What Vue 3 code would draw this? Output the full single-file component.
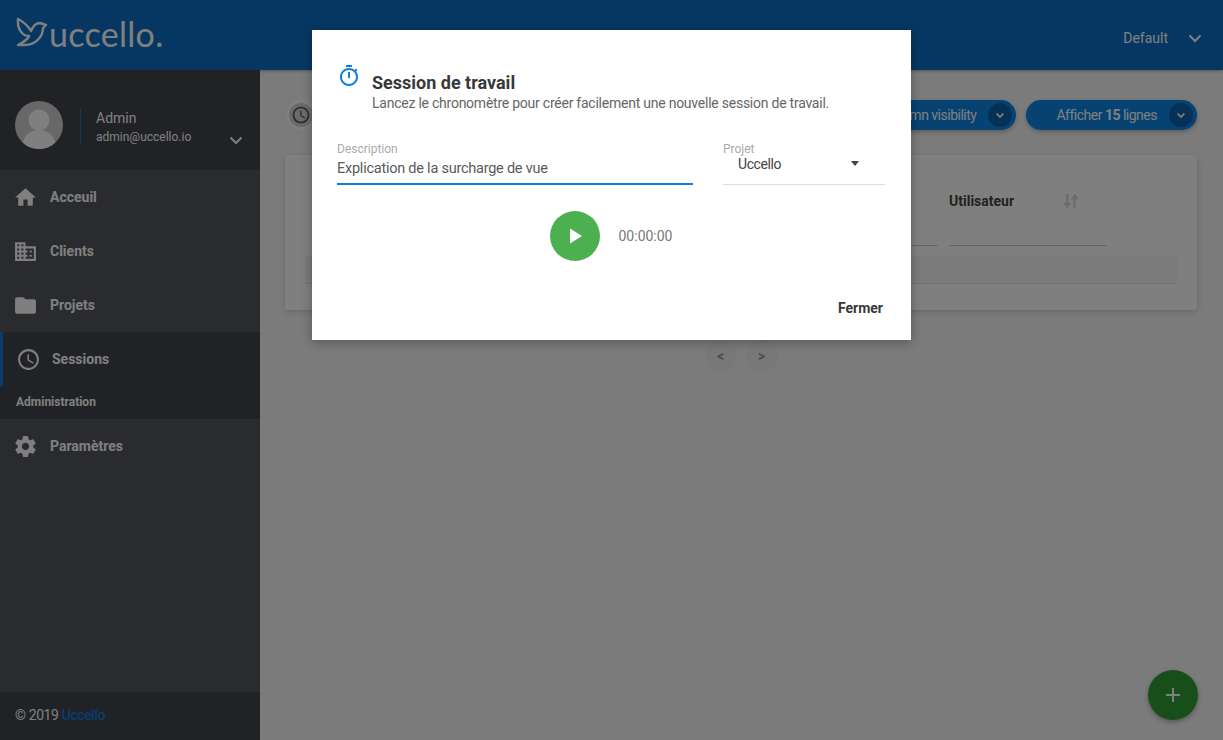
<template>
  <div class="page">
    <header class="topbar">
      <div class="logo">
        <svg class="bird" width="32" height="32" viewBox="0 0 32 32" fill="none" stroke="#fff" stroke-width="2.400" stroke-linejoin="round" stroke-linecap="round">
          <path d="M2 2C8 5 12 9 15 14C17 9 20 6 24 6L30 8L27 11C27 19 20 28 9 28L2 28C8 25 12 22 13 19C7 19 1 13 2 2Z" />
        </svg>
        <span class="logo-text">uccello.</span>
      </div>
      <div class="theme">
        <span>Default</span>
        <svg width="24" height="24" viewBox="0 0 24 24" fill="none" stroke="#fff" stroke-width="2"><path d="M6.500 9.500L12 15l5.500-5.500" /></svg>
      </div>
    </header>

    <div class="body">
      <aside class="sidebar">
        <div class="user">
          <div class="avatar">
            <svg width="48" height="48" viewBox="0 0 48 48" fill="#fff">
              <circle cx="24" cy="19" r="10.500" />
              <path d="M7 48C7 36 14 29 24 29C34 29 41 36 41 48Z" />
            </svg>
          </div>
          <div class="user-info">
            <div class="user-name">Admin</div>
            <div class="user-mail">admin@uccello.io</div>
          </div>
          <svg class="user-arrow" width="24" height="24" viewBox="0 0 24 24" fill="none" stroke="#fff" stroke-width="2"><path d="M6.500 9.500L12 15l5.500-5.500" /></svg>
        </div>

        <nav class="menu">
          <a v-for="item in topItems" :key="item.label" class="item" :class="{ active: item.active }">
            <svg class="item-icon" viewBox="0 0 24 24"><path v-for="d in item.paths" :key="d" :d="d" /></svg>
            <span>{{ item.label }}</span>
          </a>
          <div class="section">Administration</div>
          <a class="item">
            <svg class="item-icon" viewBox="0 0 24 24"><path :d="gear" /></svg>
            <span>Paramètres</span>
          </a>
        </nav>

        <footer class="copy">© 2019 <b>Uccello</b></footer>
      </aside>

      <main class="content">
        <div class="toolbar">
          <div class="history">
            <svg width="20" height="20" viewBox="0 0 24 24"><path v-for="d in clock" :key="d" :d="d" fill="#555" /></svg>
          </div>
          <div class="spacer" />
          <div class="pill pill-col">
            <span>Column visibility</span>
            <i class="pill-arrow"><svg width="16" height="16" viewBox="0 0 24 24" fill="none" stroke="#fff" stroke-width="2.500"><path d="M7 10l5 5 5-5" /></svg></i>
          </div>
          <div class="pill pill-lines">
            <span>Afficher <b>15</b> lignes</span>
            <i class="pill-arrow"><svg width="16" height="16" viewBox="0 0 24 24" fill="none" stroke="#fff" stroke-width="2.500"><path d="M7 10l5 5 5-5" /></svg></i>
          </div>
        </div>

        <section class="card">
          <div class="columns">
            <div class="column column-prev">
              <div class="column-line" />
            </div>
            <div class="column">
              <div class="column-head">
                <span>Utilisateur</span>
                <svg width="20" height="20" viewBox="0 0 24 24" fill="#d8d8d8"><path d="M9 3H6v11H2.500L7.500 21l5-7H9zM21.500 10L16.500 3l-5 7H14.500v11h3V10z" /></svg>
              </div>
              <div class="column-line" />
            </div>
          </div>
          <div class="row" />
        </section>

        <div class="pager">
          <span class="page-btn">&lt;</span>
          <span class="page-btn">&gt;</span>
        </div>

        <div class="fab">
          <svg width="24" height="24" viewBox="0 0 24 24" fill="#fff"><path d="M19 13h-6v6h-2v-6H5v-2h6V5h2v6h6z" /></svg>
        </div>
      </main>
    </div>

    <div class="overlay">
      <div class="modal">
        <div class="modal-head">
          <svg class="timer" width="24" height="24" viewBox="0 0 24 24" fill="#0f7ddc"><path d="M15 1H9v2h6V1zm-4 13h2V8h-2v6zm8.030-6.610l1.420-1.420c-.43-.51-.9-.99-1.410-1.410l-1.420 1.420C16.070 4.740 14.120 4 12 4c-4.970 0-9 4.030-9 9s4.020 9 9 9 9-4.030 9-9c0-2.120-.74-4.070-1.970-5.610zM12 20c-3.870 0-7-3.130-7-7s3.130-7 7-7 7 3.130 7 7-3.130 7-7 7z" /></svg>
          <div>
            <h2>Session de travail</h2>
            <p>Lancez le chronomètre pour créer facilement une nouvelle session de travail.</p>
          </div>
        </div>

        <div class="fields">
          <div class="field field-desc">
            <label>Description</label>
            <div class="value">Explication de la surcharge de vue</div>
          </div>
          <div class="field field-project">
            <label>Projet</label>
            <div class="select">
              <span>Uccello</span>
              <i class="caret" />
            </div>
          </div>
        </div>

        <div class="timer-row">
          <div class="play">
            <svg width="24" height="24" viewBox="0 0 24 24" fill="#fff"><path d="M7 4.500v15L19 12z" /></svg>
          </div>
          <span class="time">00:00:00</span>
        </div>

        <div class="actions">
          <span class="close">Fermer</span>
        </div>
      </div>
    </div>
  </div>
</template>

<script setup>
const clock = [
  'M11.99 2C6.47 2 2 6.48 2 12s4.470 10 9.990 10C17.520 22 22 17.520 22 12S17.520 2 11.990 2zM12 20c-4.420 0-8-3.580-8-8s3.580-8 8-8 8 3.580 8 8-3.580 8-8 8z',
  'M12.500 7H11v6l5.250 3.150.75-1.230-4.500-2.670z',
]

const gear = 'M19.430 12.980c.04-.32.07-.64.07-.98s-.03-.66-.07-.98l2.110-1.650c.19-.15.24-.42.12-.64l-2-3.460c-.12-.22-.39-.3-.61-.22l-2.490 1c-.52-.4-1.080-.73-1.690-.98l-.38-2.650C14.460 2.180 14.250 2 14 2h-4c-.25 0-.46.18-.49.42l-.38 2.650c-.61.25-1.170.59-1.690.98l-2.490-1c-.23-.09-.49 0-.61.22l-2 3.460c-.13.22-.07.49.12.64l2.110 1.650c-.04.32-.07.65-.07.98s.03.66.07.98l-2.110 1.650c-.19.15-.24.42-.12.64l2 3.460c.12.22.39.3.61.22l2.490-1c.52.4 1.080.73 1.690.98l.38 2.650c.03.24.24.42.49.42h4c.25 0 .46-.18.49-.42l.38-2.650c.61-.25 1.170-.59 1.690-.98l2.490 1c.23.09.49 0 .61-.22l2-3.460c.12-.22.07-.49-.12-.64l-2.110-1.650zM12 15.500c-1.930 0-3.500-1.570-3.500-3.500s1.570-3.500 3.500-3.500 3.500 1.570 3.500 3.500-1.570 3.500-3.500 3.500z'

const topItems = [
  { label: 'Acceuil', paths: ['M10 20v-6h4v6h5v-8h3L12 3 2 12h3v8z'] },
  { label: 'Clients', paths: ['M12 7V3H2v18h20V7H12zM6 19H4v-2h2v2zm0-4H4v-2h2v2zm0-4H4V9h2v2zm0-4H4V5h2v2zm4 12H8v-2h2v2zm0-4H8v-2h2v2zm0-4H8V9h2v2zm0-4H8V5h2v2zm10 12h-8v-2h2v-2h-2v-2h2v-2h-2V9h8v10zm-2-8h-2v2h2v-2zm0 4h-2v2h2v-2z'] },
  { label: 'Projets', paths: ['M10 4H4c-1.100 0-1.990.9-1.990 2L2 18c0 1.100.9 2 2 2h16c1.100 0 2-.9 2-2V8c0-1.100-.9-2-2-2h-8l-2-2z'] },
  { label: 'Sessions', paths: clock, active: true },
]
</script>

<style>
html, body { margin: 0; }
</style>

<style scoped>
.page {
  position: relative;
  width: 1223px;
  height: 740px;
  overflow: hidden;
  display: flex;
  flex-direction: column;
  font-family: Roboto, "Liberation Sans", sans-serif;
  background: #f6f6f6;
}

.topbar {
  height: 70px;
  flex-shrink: 0;
  display: flex;
  align-items: center;
  justify-content: space-between;
  padding: 0 16px;
  background: #0c6fc4;
  box-sizing: border-box;
  box-shadow: 0 1px 3px rgba(0,0,0,0.3);
  position: relative;
}
.logo {
  display: flex;
  align-items: center;
  gap: 1px;
  color: #fff;
}
.bird { margin-top: -4px; }
.logo-text {
  font-family: Lato, sans-serif;
  font-weight: 400;
  font-size: 34px;
  letter-spacing: 0.3px;
  line-height: 1;
  margin-top: -2px;
}
.theme {
  display: flex;
  align-items: center;
  gap: 15px;
  padding-top: 6px;
  color: #fff;
  font-size: 14px;
}

.body {
  flex: 1;
  display: flex;
  min-height: 0;
}

.sidebar {
  width: 260px;
  flex-shrink: 0;
  display: flex;
  flex-direction: column;
  background: #54575e;
  color: #fff;
}
.user {
  height: 100px;
  flex-shrink: 0;
  display: flex;
  align-items: center;
  background: #42454b;
  padding: 10px 0 0 15px;
  box-sizing: border-box;
  position: relative;
}
.avatar {
  width: 48px;
  height: 48px;
  border-radius: 50%;
  overflow: hidden;
  background: #d0d0d0;
}
.user-info {
  margin-left: 17px;
  margin-top: 3px;
  padding-left: 15px;
  border-left: 1px solid #0d7adb;
  height: 37px;
  display: flex;
  flex-direction: column;
  justify-content: center;
}
.user-name { font-size: 14px; line-height: 20px; }
.user-mail { font-size: 12px; line-height: 18px; }
.user-arrow {
  position: absolute;
  left: 224px;
  top: 58px;
}

.menu {
  flex: 1;
  display: flex;
  flex-direction: column;
}
.item {
  height: 54px;
  flex-shrink: 0;
  display: flex;
  align-items: center;
  gap: 12px;
  padding-left: 13px;
  box-sizing: border-box;
  font-size: 14px;
  font-weight: 700;
}
.item.active {
  background: #42454b;
  border-left: 3px solid #0d7adb;
  gap: 11px;
}
.item-icon {
  width: 25px;
  height: 25px;
  fill: #fff;
}
.section {
  height: 33px;
  background: #42454b;
  font-size: 12px;
  font-weight: 700;
  line-height: 33px;
  padding-left: 16px;
}
.copy {
  height: 48px;
  flex-shrink: 0;
  margin-top: auto;
  background: #42454b;
  font-size: 14px;
  letter-spacing: -0.4px;
  line-height: 47px;
  padding-left: 15px;
}
.copy b { color: #0d7adb; font-weight: 500; }

.content {
  flex: 1;
  padding: 30px 26px 0 25px;
  box-sizing: border-box;
  position: relative;
}
.toolbar {
  display: flex;
  align-items: center;
  gap: 10px;
  height: 30px;
}
.history {
  width: 24px;
  height: 24px;
  margin-left: 4px;
  border-radius: 50%;
  display: flex;
  align-items: center;
  justify-content: center;
  background: #d4d4d4;
  box-shadow: 0 0 0 3px #fff;
}
.spacer { flex: 1; }
.pill {
  height: 30px;
  border-radius: 15px;
  display: flex;
  align-items: center;
  background: #0c84e4;
  color: #fff;
  font-size: 14px;
  letter-spacing: -0.5px;
  box-sizing: border-box;
  padding: 0 4px 0 30px;
  gap: 12px;
  box-shadow: 0 2px 4px rgba(0,0,0,0.25);
}
.pill b { font-weight: 700; }
.pill-arrow {
  width: 24px;
  height: 24px;
  border-radius: 50%;
  background: rgba(0,0,0,0.25);
  display: flex;
  align-items: center;
  justify-content: center;
}

.card {
  height: 155px;
  margin-top: 25px;
  padding: 0 20px;
  box-sizing: border-box;
  background: #fff;
  border-radius: 3px;
  box-shadow: 0 2px 6px rgba(0,0,0,0.15);
}
.columns {
  height: 101px;
  display: flex;
  justify-content: flex-end;
  gap: 11px;
  padding: 37px 70px 0 0;
  box-sizing: border-box;
}
.column { width: 158px; }
.column-prev { padding-top: 53px; }
.column-head {
  display: flex;
  align-items: center;
  justify-content: space-between;
  width: 132px;
  font-size: 14px;
  font-weight: 700;
  color: #444;
  height: 18px;
}
.column-line {
  margin-top: 35px;
  height: 1px;
  background: #ccc;
}
.column-prev .column-line { margin-top: 0; }
.row {
  height: 28px;
  background: #f6f6f6;
  border-bottom: 1px solid #e6e6e6;
  box-sizing: border-box;
}

.pager {
  display: flex;
  justify-content: center;
  gap: 9px;
  margin-top: 30px;
}
.page-btn {
  width: 32px;
  height: 32px;
  border-radius: 50%;
  background: #f0f0f0;
  color: #999;
  font-size: 14px;
  font-weight: 700;
  display: flex;
  align-items: center;
  justify-content: center;
}

.fab {
  position: absolute;
  right: 25px;
  bottom: 20px;
  width: 50px;
  height: 50px;
  border-radius: 50%;
  background: #2f9c33;
  display: flex;
  align-items: center;
  justify-content: center;
  box-shadow: 0 2px 5px rgba(0,0,0,0.3);
}

.overlay {
  position: absolute;
  inset: 0;
  background: rgba(0,0,0,0.5);
}
.modal {
  width: 599px;
  height: 310px;
  margin: 30px auto 0;
  padding: 34px 26px 0 25px;
  box-sizing: border-box;
  background: #fff;
  box-shadow: 0 2px 10px rgba(0,0,0,0.3);
  color: #333;
  display: flex;
  flex-direction: column;
}
.modal-head {
  display: flex;
  gap: 11px;
}
.modal-head h2 {
  margin: 9px 0 0;
  font-size: 18px;
  font-weight: 700;
  line-height: 20px;
  color: #383838;
}
.modal-head p {
  margin: 0;
  font-size: 14px;
  letter-spacing: -0.24px;
  line-height: 20px;
  color: #666;
}

.fields {
  display: flex;
  justify-content: space-between;
  margin-top: 29px;
}
.field label {
  display: block;
  font-size: 12px;
  line-height: 14px;
  color: #aaa;
}
.field-desc { width: 356px; }
.value {
  font-size: 14.500px;
  letter-spacing: -0.24px;
  line-height: 20px;
  height: 29px;
  padding-top: 3px;
  box-sizing: border-box;
  color: #5a5a5a;
  border-bottom: 2px solid #0f7ddc;
}
.field-project { width: 162px; }
.select {
  display: flex;
  align-items: center;
  justify-content: space-between;
  height: 29px;
  padding: 0 26px 13px 15px;
  box-sizing: border-box;
  border-bottom: 1px solid #ddd;
  font-size: 14px;
  letter-spacing: -0.4px;
  color: #444;
}
.caret {
  width: 0;
  height: 0;
  border-left: 4.500px solid transparent;
  border-right: 4.500px solid transparent;
  border-top: 5px solid #444;
}

.timer-row {
  display: flex;
  align-items: center;
  justify-content: center;
  gap: 19px;
  margin-top: 26px;
}
.play {
  width: 50px;
  height: 50px;
  border-radius: 50%;
  background: #4caf50;
  display: flex;
  align-items: center;
  justify-content: center;
}
.time {
  font-size: 14px;
  color: #777;
}

.actions {
  display: flex;
  justify-content: flex-end;
  margin-top: 39px;
}
.close {
  font-size: 14px;
  font-weight: 700;
  color: #383838;
  margin-right: 2px;
}
</style>
